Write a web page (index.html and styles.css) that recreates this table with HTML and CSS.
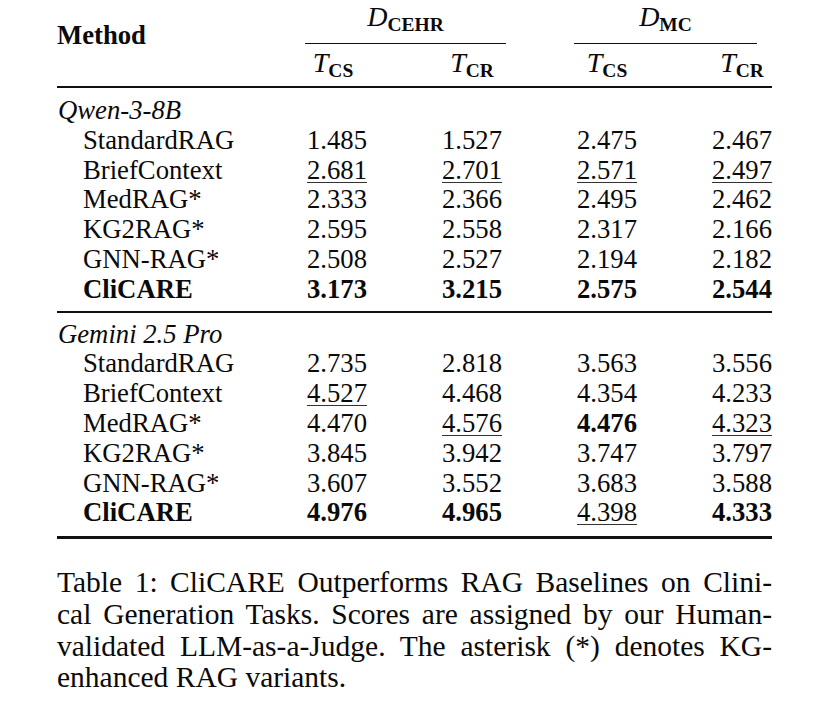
FILE: index.html
```html
<!DOCTYPE html>
<html>
<head>
<meta charset="utf-8">
<link rel="stylesheet" href="styles.css">
</head>
<body>
<div class="page">
  <div class="table">
    <div class="head">
      <div class="method">Method</div>
      <div class="dspan dspan-cehr"><span class="m">D</span><span class="sub">CEHR</span></div>
      <div class="dspan dspan-mc"><span class="m">D</span><span class="sub">MC</span></div>
      <div class="th th-1"><span class="m">T</span><span class="sub">CS</span></div>
      <div class="th"><span class="m">T</span><span class="sub">CR</span></div>
      <div class="th"><span class="m">T</span><span class="sub">CS</span></div>
      <div class="th"><span class="m">T</span><span class="sub">CR</span></div>
    </div>
    <div class="rule rule-head"></div>
    <div class="group group-1">
      <div class="label">Qwen-3-8B</div>
      <div class="name">StandardRAG</div><div class="num">1.485</div><div class="num">1.527</div><div class="num">2.475</div><div class="num">2.467</div>
      <div class="name">BriefContext</div><div class="num"><span class="u">2.681</span></div><div class="num"><span class="u">2.701</span></div><div class="num"><span class="u">2.571</span></div><div class="num"><span class="u">2.497</span></div>
      <div class="name">MedRAG*</div><div class="num">2.333</div><div class="num">2.366</div><div class="num">2.495</div><div class="num">2.462</div>
      <div class="name">KG2RAG*</div><div class="num">2.595</div><div class="num">2.558</div><div class="num">2.317</div><div class="num">2.166</div>
      <div class="name">GNN-RAG*</div><div class="num">2.508</div><div class="num">2.527</div><div class="num">2.194</div><div class="num">2.182</div>
      <div class="name b">CliCARE</div><div class="num b">3.173</div><div class="num b">3.215</div><div class="num b">2.575</div><div class="num b">2.544</div>
    </div>
    <div class="rule rule-mid"></div>
    <div class="group group-2">
      <div class="label">Gemini 2.5 Pro</div>
      <div class="name">StandardRAG</div><div class="num">2.735</div><div class="num">2.818</div><div class="num">3.563</div><div class="num">3.556</div>
      <div class="name">BriefContext</div><div class="num"><span class="u">4.527</span></div><div class="num">4.468</div><div class="num">4.354</div><div class="num">4.233</div>
      <div class="name">MedRAG*</div><div class="num">4.470</div><div class="num"><span class="u">4.576</span></div><div class="num b">4.476</div><div class="num"><span class="u">4.323</span></div>
      <div class="name">KG2RAG*</div><div class="num">3.845</div><div class="num">3.942</div><div class="num">3.747</div><div class="num">3.797</div>
      <div class="name">GNN-RAG*</div><div class="num">3.607</div><div class="num">3.552</div><div class="num">3.683</div><div class="num">3.588</div>
      <div class="name b">CliCARE</div><div class="num b">4.976</div><div class="num b">4.965</div><div class="num"><span class="u">4.398</span></div><div class="num b">4.333</div>
    </div>
    <div class="rule rule-bottom"></div>
  </div>
  <div class="caption">
    <div class="cline">Table 1: CliCARE Outperforms RAG Baselines on Clini-</div>
    <div class="cline">cal Generation Tasks. Scores are assigned by our Human-</div>
    <div class="cline">validated LLM-as-a-Judge. The asterisk (*) denotes KG-</div>
    <div class="cline cline-last">enhanced RAG variants.</div>
  </div>
</div>
</body>
</html>
```

FILE: styles.css
```css
html, body {
  margin: 0;
  padding: 0;
  background: #ffffff;
}

body {
  font-family: "Liberation Serif", "Times New Roman", serif;
  color: #0a0a0a;
}

.page {
  padding-left: 57px;
  width: 715px;
}

.table {
  font-size: 26.7px;
}

.head {
  display: grid;
  grid-template-columns: 175px repeat(4, 60px);
  column-gap: 75px;
  padding-top: 2px;
  padding-bottom: 7.5px;
  line-height: 29.8px;
}

.method {
  grid-row: 1 / 3;
  grid-column: 1;
  align-self: start;
  padding-top: 19px;
  font-weight: bold;
  white-space: nowrap;
}

.dspan {
  grid-row: 1;
  text-align: center;
  padding-bottom: 10px;
  border-bottom: 1px solid #111;
  white-space: nowrap;
}

.dspan-cehr {
  grid-column: 2 / 4;
  margin: 0 -4px 0 -2px;
}

.dspan-mc {
  grid-column: 4 / 6;
  margin: 0 15px 0 -3px;
}

.th {
  grid-row: 2;
  text-align: center;
  white-space: nowrap;
  padding-top: 4px;
}

.th-1 {
  padding-right: 8px;
}

.m {
  font-style: italic;
  font-size: 28px;
}

.sub {
  font-size: 19.5px;
  font-weight: bold;
  line-height: 0;
  vertical-align: -5px;
}

.rule {
  background: #111;
}

.rule-head {
  height: 2px;
}

.rule-mid {
  height: 2px;
}

.rule-bottom {
  height: 3px;
}

.group {
  display: grid;
  grid-template-columns: 175px repeat(4, 60px);
  column-gap: 75px;
  line-height: 29.8px;
}

.group-1 {
  padding-top: 8px;
  padding-bottom: 6.4px;
}

.group-2 {
  padding-top: 6.5px;
  padding-bottom: 7.5px;
}

.label {
  grid-column: 1 / -1;
  font-style: italic;
  padding-left: 1px;
}

.name {
  grid-column: 1;
  padding-left: 26px;
  white-space: nowrap;
}

.num {
  text-align: center;
  white-space: nowrap;
}

.b {
  font-weight: bold;
}

.u {
  text-decoration: underline;
  text-decoration-thickness: 1px;
  text-underline-offset: 3px;
  text-decoration-color: #333;
}

.caption {
  margin-top: 28.5px;
  font-size: 29.5px;
  line-height: 31.7px;
}

.cline {
  text-align: justify;
  text-align-last: justify;
}

.cline-last {
  text-align-last: left;
}
```
